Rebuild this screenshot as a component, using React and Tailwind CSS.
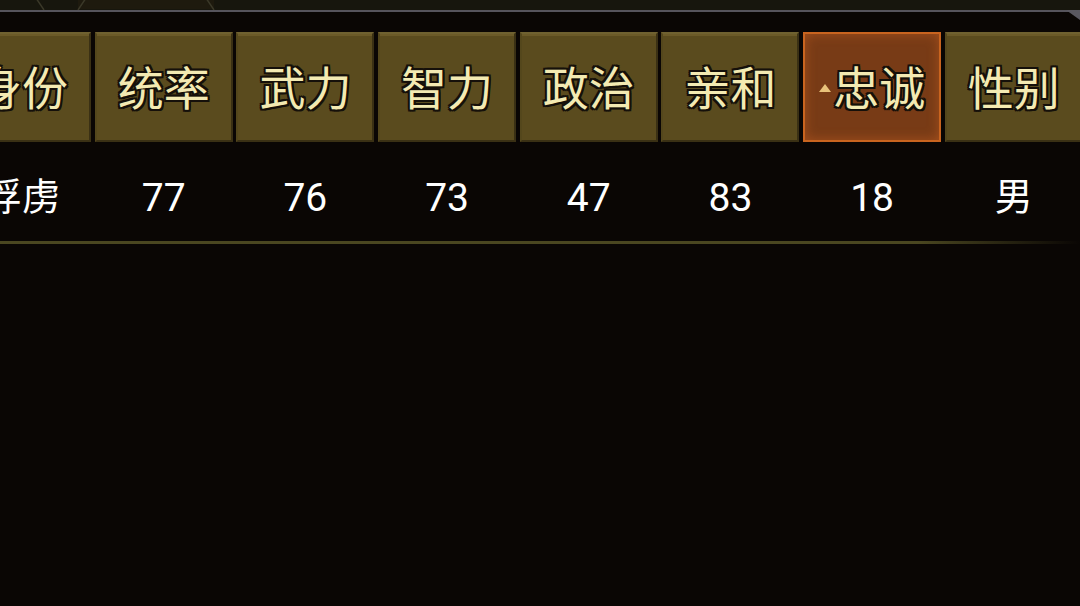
import React from 'react';

const headers = ['身份', '统率', '武力', '智力', '政治', '亲和', '忠诚', '性别'];
const values = ['俘虏', '77', '76', '73', '47', '83', '18', '男'];
const ACTIVE = 6;

const outline =
    '[text-shadow:-2px_0_#15100a,2px_0_#15100a,0_-2px_#15100a,0_2px_#15100a,-2px_-2px_#15100a,2px_2px_#15100a,-2px_2px_#15100a,2px_-2px_#15100a]';

const HeaderCell = ({ label, active }) => (
    <div
        className={`relative h-[110px] flex items-center justify-center border-2 ${
            active
                ? 'bg-[#783b16] border-[#c9641f] shadow-[inset_0_0_12px_rgba(230,110,40,0.4)]'
                : 'bg-[#5a4b1e] border-t-[#6f6130] border-l-[#54471c] border-r-[#3a3014] border-b-[#3a3014] shadow-[inset_0_2px_0_rgba(140,120,60,0.35)]'
        }`}
    >
        {active && (
            <span className="w-0 h-0 border-l-[6px] border-r-[6px] border-b-[8px] border-l-transparent border-r-transparent border-b-[#e8c27a] mr-[2px] mt-[2px]" />
        )}
        <span className={`text-[46px] leading-none font-normal text-[#f3eab2] pt-[4px] ${outline}`}>
            {label}
        </span>
    </div>
);

export default function App() {
    return (
        <div className="w-[1080px] h-[606px] overflow-hidden bg-[#0a0604] font-['Roboto','Noto_Sans_CJK_SC',sans-serif]">
            <div className="relative h-[10px] bg-[#17160d]">
                <svg className="absolute inset-0" width="1080" height="10" viewBox="0 0 1080 10">
                    <rect x="78" y="0" width="136" height="9" fill="#1e1a0e" />
                    <path d="M36 -2 L44 10 M78 10 L86 -2 M206 -2 L214 10" stroke="#3a3828" strokeWidth="1.5" fill="none" />
                </svg>
            </div>
            <div className="relative h-[2px] bg-[#56545c]">
                <svg className="absolute right-0 top-0" width="14" height="12" viewBox="0 0 14 12">
                    <path d="M0 0 L14 0 L14 10 Z" fill="#5a5860" />
                </svg>
            </div>

            <div className="mt-[20px] ml-[-47px] grid grid-cols-[repeat(8,138px)] gap-x-[3.7px]">
                {headers.map((h, i) => (
                    <HeaderCell key={h} label={h} active={i === ACTIVE} />
                ))}
                {values.map((v, i) => (
                    <div
                        key={i}
                        className={`h-[99px] flex items-center justify-center text-white leading-none ${
                            /\d/.test(v) ? 'text-[39px] pt-[13px]' : 'text-[38px] pt-[10px]'
                        }`}
                    >
                        {v}
                    </div>
                ))}
            </div>

            <div className="h-[3px] bg-gradient-to-r from-[#4a4620] from-85% to-transparent" />
        </div>
    );
}
